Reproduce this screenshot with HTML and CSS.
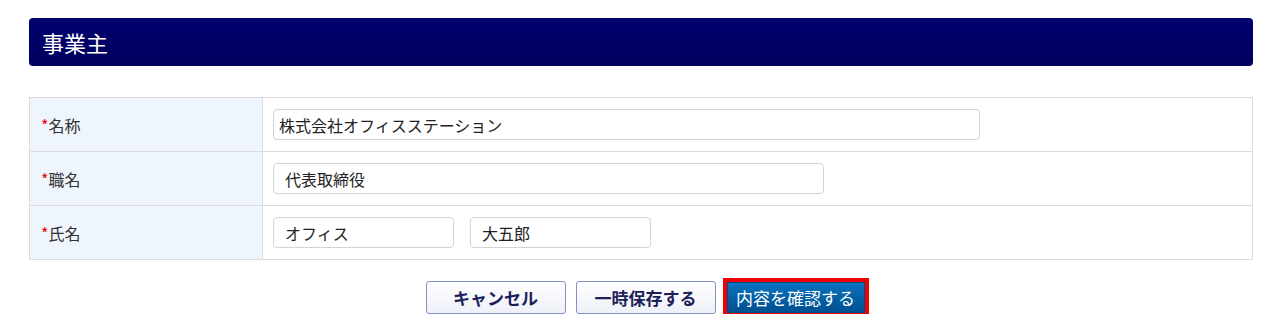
FILE: index.html
```html
<!DOCTYPE html>
<html lang="ja">
<head>
  <meta charset="UTF-8">
  <title>事業主</title>
  <link rel="stylesheet" href="styles.css">
</head>
<body>
  <div class="page">
    <!-- 見出し -->
    <h2 class="section-title">事業主</h2>

    <!-- 入力フォーム -->
    <table class="form-table">
      <tr>
        <th><span class="req">*</span>名称</th>
        <td><input class="field field-wide field-tight" type="text" value="株式会社オフィスステーション"></td>
      </tr>
      <tr>
        <th><span class="req">*</span>職名</th>
        <td><input class="field field-mid" type="text" value="代表取締役"></td>
      </tr>
      <tr>
        <th><span class="req">*</span>氏名</th>
        <td>
          <div class="name-pair">
            <input class="field field-short" type="text" value="オフィス">
            <input class="field field-short" type="text" value="大五郎">
          </div>
        </td>
      </tr>
    </table>

    <!-- ボタン -->
    <div class="actions">
      <button class="btn btn-sub">キャンセル</button>
      <button class="btn btn-sub">一時保存する</button>
      <button class="btn btn-main">内容を確認する</button>
    </div>
  </div>
</body>
</html>
```

FILE: styles.css
```css
/* 共通 */
* {
  margin: 0;
  padding: 0;
  box-sizing: border-box;
}

body {
  font-family: "Noto Sans CJK JP", "Liberation Sans", sans-serif;
  background: #fff;
  color: #333;
}

.page {
  width: 1224px;
  margin: 18px 0 0 29px;
}

/* 見出し */
.section-title {
  height: 48px;
  padding-left: 13px;
  display: flex;
  align-items: center;
  font-size: 22px;
  font-weight: normal;
  color: #fff;
  background: linear-gradient(to bottom, #000070, #00005e);
  border-radius: 4px;
}

/* フォーム */
.form-table {
  width: 100%;
  margin-top: 31px;
  border-collapse: collapse;
  border: 1px solid #dcdcdc;
}

.form-table tr {
  height: 54px;
}

.form-table th,
.form-table td {
  border-top: 1px solid #dcdcdc;
  font-size: 16px;
  vertical-align: middle;
}

.form-table th {
  width: 233px;
  padding-left: 11px;
  text-align: left;
  font-weight: normal;
  color: #333;
  background: #eef5fc;
  border-right: 1px solid #dcdcdc;
}

.form-table td {
  padding-left: 10px;
}

.req {
  color: #e60000;
}

.field {
  display: block;
  height: 31px;
  padding: 0 11px;
  font-family: inherit;
  font-size: 16px;
  color: #222;
  background: #fff;
  border: 1px solid #d4d4d4;
  border-radius: 4px;
}

.field-tight { padding-left: 5px; }
.field-wide { width: 707px; }
.field-mid { width: 551px; }
.field-short { width: 181px; }

.name-pair {
  display: flex;
  gap: 16px;
}

/* ボタン */
.actions {
  display: flex;
  justify-content: center;
  align-items: center;
  gap: 10px;
  margin-top: 21px;
  padding-left: 8px;
}

.btn {
  height: 33px;
  font-family: inherit;
  font-size: 17px;
  border-radius: 3px;
  cursor: pointer;
}

.btn-sub {
  width: 140px;
  font-weight: bold;
  color: #1c1f5a;
  background: linear-gradient(to bottom, #ffffff, #eef0f8);
  border: 1px solid #8390c4;
}

.btn-main {
  width: 138px;
  height: 31px;
  margin-left: 1px;
  color: #fff;
  background: linear-gradient(to bottom, #0a72c0, #00508f);
  border: 1px solid #004a85;
  border-radius: 0;
  outline: 4px solid #ee0000;
}
```
